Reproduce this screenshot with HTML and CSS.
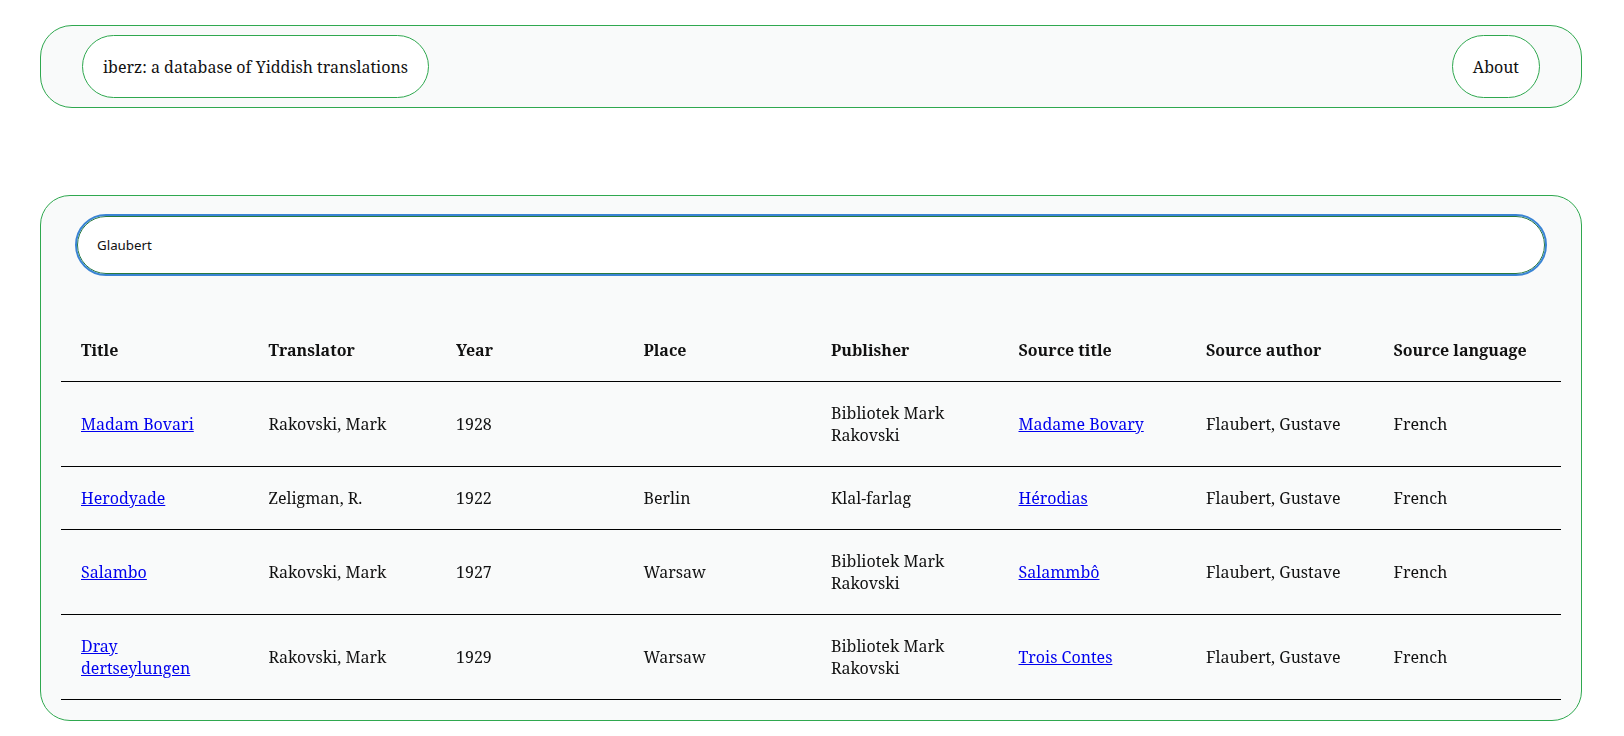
FILE: index.html
```html
<!DOCTYPE html>
<html lang="en">
<head>
<meta charset="utf-8">
<title>iberz</title>
<link rel="stylesheet" href="styles.css">
</head>
<body>
<header class="topbar">
  <a class="pill" href="#">iberz: a database of Yiddish translations</a>
  <a class="pill" href="#">About</a>
</header>
<main class="panel">
  <input class="search" type="text" value="Glaubert" autofocus>
  <table class="results">
    <thead>
      <tr>
        <th>Title</th><th>Translator</th><th>Year</th><th>Place</th><th>Publisher</th><th>Source title</th><th>Source author</th><th>Source language</th>
      </tr>
    </thead>
    <tbody>
      <tr>
        <td><a href="#">Madam Bovari</a></td><td>Rakovski, Mark</td><td>1928</td><td></td><td>Bibliotek Mark Rakovski</td><td><a href="#">Madame Bovary</a></td><td>Flaubert, Gustave</td><td>French</td>
      </tr>
      <tr>
        <td><a href="#">Herodyade</a></td><td>Zeligman, R.</td><td>1922</td><td>Berlin</td><td>Klal-farlag</td><td><a href="#">Hérodias</a></td><td>Flaubert, Gustave</td><td>French</td>
      </tr>
      <tr>
        <td><a href="#">Salambo</a></td><td>Rakovski, Mark</td><td>1927</td><td>Warsaw</td><td>Bibliotek Mark Rakovski</td><td><a href="#">Salammbô</a></td><td>Flaubert, Gustave</td><td>French</td>
      </tr>
      <tr>
        <td><a href="#">Dray dertseylungen</a></td><td>Rakovski, Mark</td><td>1929</td><td>Warsaw</td><td>Bibliotek Mark Rakovski</td><td><a href="#">Trois Contes</a></td><td>Flaubert, Gustave</td><td>French</td>
      </tr>
    </tbody>
  </table>
</main>
</body>
</html>
```
FILE: styles.css
```css
html, body {
  margin: 0;
  padding: 0;
  background: #ffffff;
}
body {
  font-family: "Noto Serif", "DejaVu Serif", serif;
  font-size: 16px;
  line-height: 22px;
  color: #111;
  padding-top: 25px;
}
.topbar {
  box-sizing: border-box;
  width: 1542px;
  margin: 0 0 0 40px;
  display: flex;
  justify-content: space-between;
  align-items: center;
  padding: 9px 41px;
  background: #f9fafa;
  border: 1px solid #2fa84f;
  border-radius: 32px;
}
.pill {
  display: block;
  padding: 19.5px 20px;
  background: #ffffff;
  border: 1px solid #2fa84f;
  border-radius: 32px;
  color: #111;
  text-decoration: none;
}
.panel {
  box-sizing: border-box;
  width: 1542px;
  margin: 87px 0 0 40px;
  padding: 18px 20px 20px;
  background: #f9fafa;
  border: 1px solid #2fa84f;
  border-radius: 30px;
  display: flex;
  flex-direction: column;
}
.search {
  box-sizing: border-box;
  margin: 2px 16px 0;
  height: 58px;
  padding: 0 19px;
  border: 1px solid #2a7a3e;
  border-radius: 30px;
  outline: 2px solid #3a84d4;
  outline-offset: 0;
  background: #fff;
  font-family: "Noto Sans", sans-serif;
  font-size: 13.33px;
  color: #111;
}
.search:focus {
  outline: 2px solid #3a84d4;
}
.results {
  margin-top: 45px;
  width: 100%;
  border-collapse: collapse;
  table-layout: fixed;
}
.results th,
.results td {
  text-align: left;
  vertical-align: middle;
  padding: 20px 20px;
  border-bottom: 1px solid #000;
}
.results th {
  font-weight: bold;
}
.results a {
  color: #0000ee;
  text-decoration: underline;
}
```
